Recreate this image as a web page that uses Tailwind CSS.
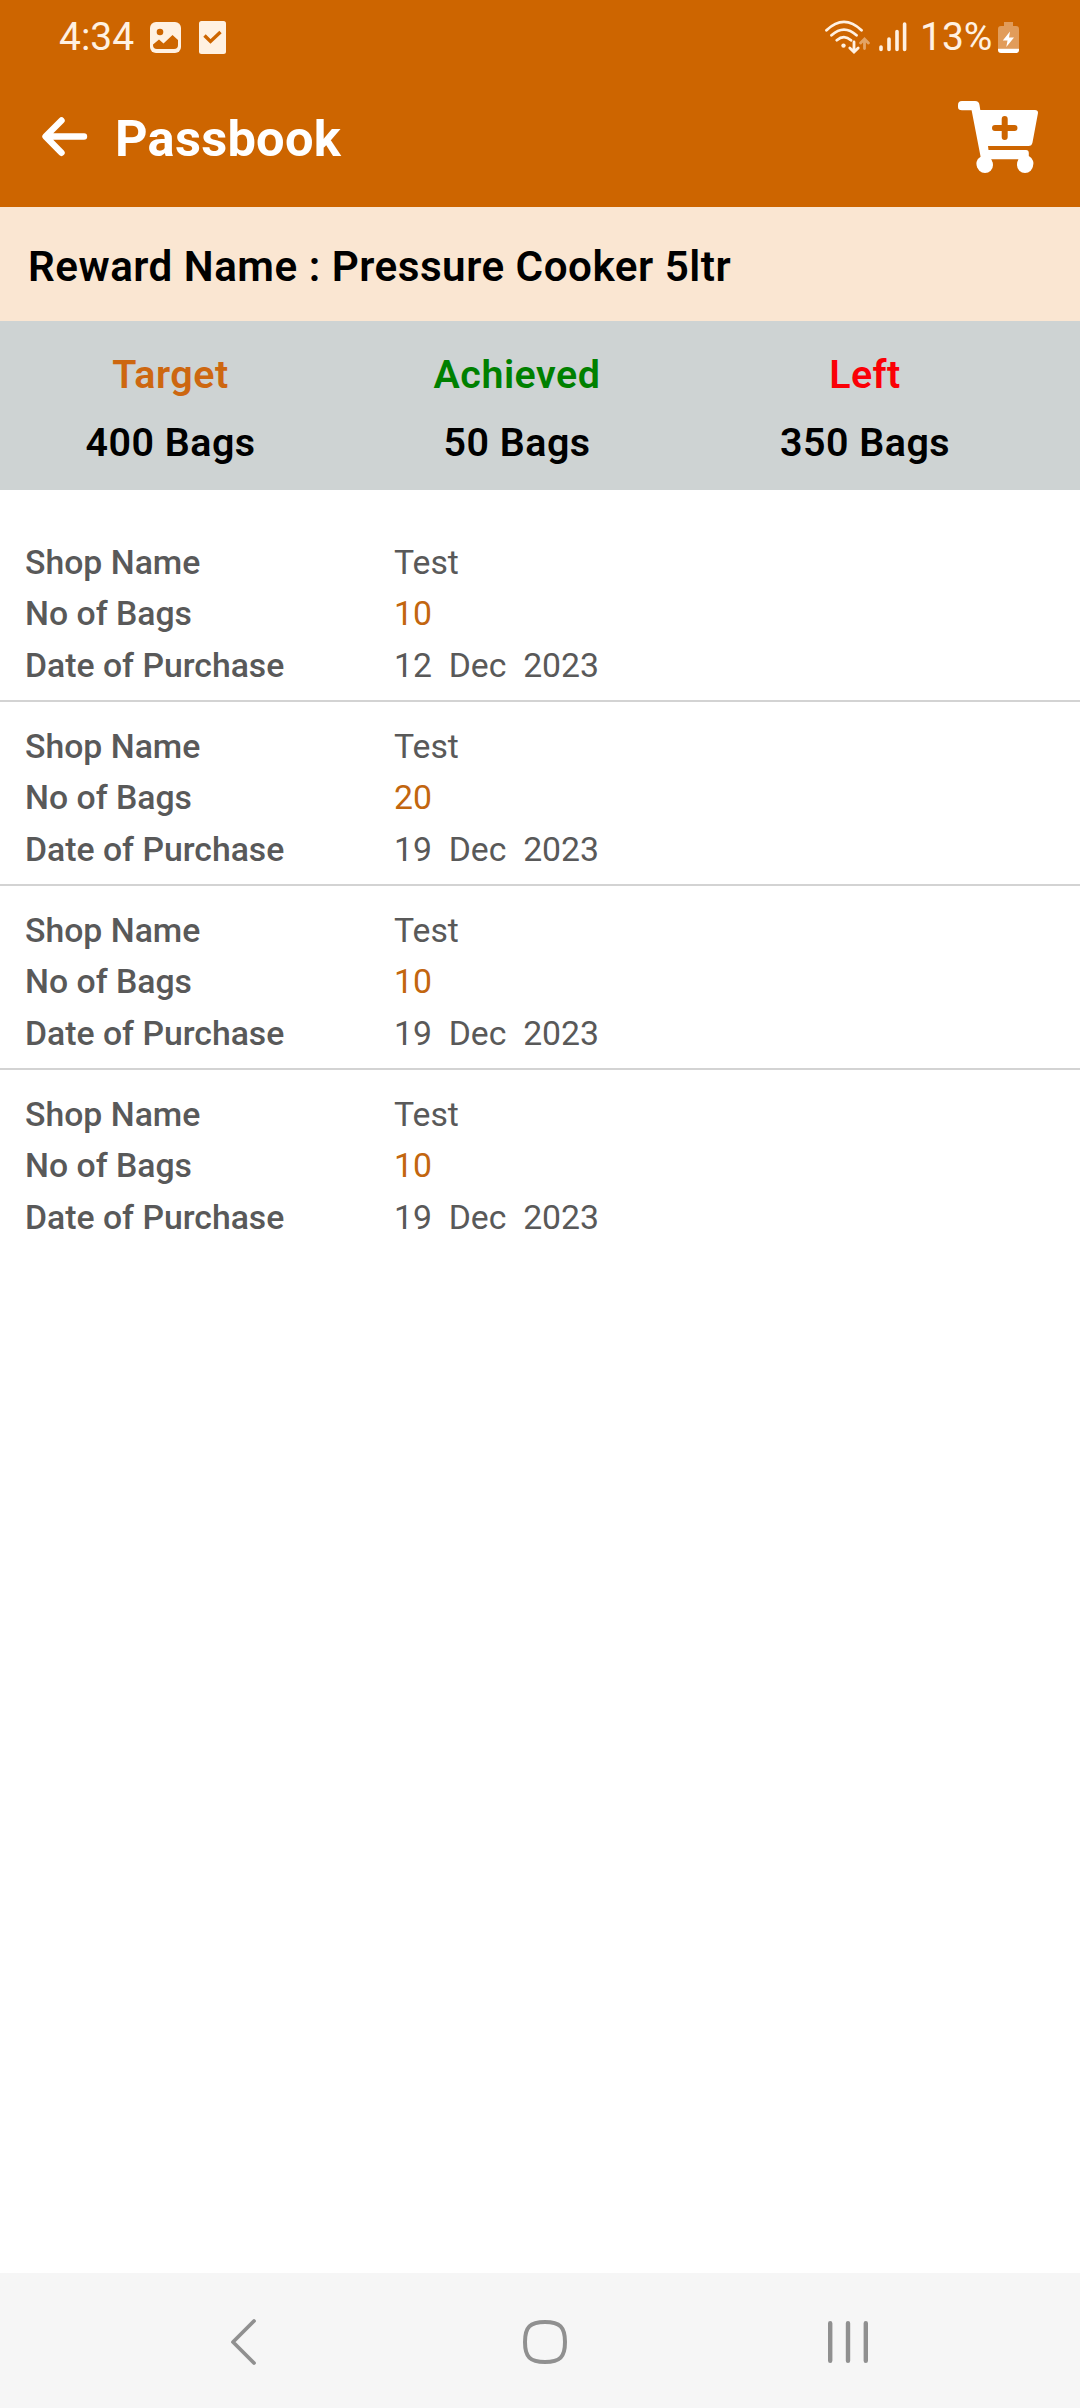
<!DOCTYPE html>
<html lang="en">

<head>
    <meta charset="UTF-8">
    <meta name="viewport" content="width=device-width, initial-scale=1.0">
    <title>Passbook</title>
    <script src="https://cdn.jsdelivr.net/npm/@tailwindcss/browser@4"></script>
</head>

<body class="bg-white">
    <div class="flex flex-col w-[1080px] h-[2408px] overflow-hidden font-[Roboto,sans-serif]">
        <header class="h-[207px] bg-[#cd6500] text-white shrink-0">
            <!-- Status bar -->
            <div class="flex items-center h-[74px] pl-[59px] text-[39px] leading-[74px] text-[#fff1e2]">
                <span class="w-[91px]">4:34</span>
                <svg class="w-[31px] h-[31px]" viewBox="0 0 31 31">
                    <rect width="31" height="31" rx="6" fill="currentColor" />
                    <circle cx="10" cy="10" r="3.3" fill="#cd6500" />
                    <path d="M3 22.5L9 17.5L13.5 21.5L22.5 13L28 18V23Q28 27 24 27H7Q3 27 3 23Z" fill="#cd6500" />
                </svg>
                <svg class="w-[27px] h-[33px] ml-[18px]" viewBox="0 0 27 33">
                    <rect width="27" height="33" rx="2.5" fill="currentColor" />
                    <path d="M5.5 14.5L11.5 20.5L21.5 11" fill="none" stroke="#cd6500" stroke-width="3.4" />
                </svg>
                <svg class="w-[45px] h-[35px] ml-[599px]" viewBox="0 0 45 35" fill="none" stroke="currentColor"
                    stroke-width="2.8" stroke-linecap="round">
                    <path d="M1.5 10.2Q19 -6.5 36.5 10.2M6.5 15.2Q19 4 31.5 15.2M11.8 20.2Q19 14 26 20.2" />
                    <circle cx="18.5" cy="25.6" r="2.2" fill="currentColor" stroke="none" />
                    <path d="M29 22V31.500M24.800 28L29 32L33.200 28" />
                    <path d="M39.500 28.500V19.500M35.600 23L39.500 19L43.400 23" class="opacity-45" />
                </svg>
                <svg class="w-[28px] h-[30px] ml-[9px]" viewBox="0 0 28 30" stroke="currentColor" stroke-width="3.6"
                    stroke-linecap="round">
                    <path d="M2 25V27.500M10 17V27.500M18 9.500V27.500M25.600 2V27.500" />
                </svg>
                <span class="w-[71px] ml-[13px]">13%</span>
                <svg class="w-[21px] h-[31px] ml-[7px]" viewBox="0 0 21 31">
                    <path d="M6 0H15V4H18Q21 4 21 7V26H0V7Q0 4 3 4H6Z" fill="currentColor" class="opacity-40" />
                    <path d="M0 26.500H21V28Q21 31 18 31H3Q0 31 0 28Z" fill="#fff" />
                    <path d="M12 9.500L4.800 18.500H9.500L8.300 25L16 15.500H11Z" fill="#fff" />
                </svg>
            </div>
            <!-- App bar -->
            <div class="flex items-center h-[133px] pl-[42px] pr-[42px] pb-[8px]">
                <svg class="w-[46px] h-[40px]" viewBox="0 0 46 40" fill="none" stroke="currentColor" stroke-width="6.4"
                    stroke-linecap="round" stroke-linejoin="round">
                    <path d="M19.500 3.500L3.500 19.500L19.500 35.800M4.500 19.500H42" />
                </svg>
                <h1 class="ml-[27px] pt-[4px] text-[50.6px] font-bold tracking-[0.25px]">Passbook</h1>
                <svg class="w-[80px] h-[72px] ml-auto" viewBox="0 0 80 72" fill="currentColor">
                    <path
                        d="M4 0H17Q21 0 21.500 4L22.300 9H77Q80.500 9 79.900 12.500L74.500 41.500Q73.800 45 70.500 45H30L30.500 49H68Q70.800 49 70.800 52V55A8 8 0 1 1 60.500 58.200H33A8 8 0 1 1 22.600 55.700L13.600 9.300H4Q0 9.300 0 6V4Q0 0 4 0Z" />
                    <circle cx="27" cy="64" r="8" />
                    <circle cx="67" cy="64" r="8" />
                    <path d="M46.700 18V36M37 27H56.500" stroke="#cd6500" stroke-width="6" stroke-linecap="round" />
                </svg>
            </div>
        </header>

        <section class="h-[114px] pl-[28px] bg-[#fae6d2] shrink-0">
            <h2 class="pt-[3px] text-[42.2px] leading-[114px] font-semibold tracking-[0.5px] text-black">Reward Name : Pressure Cooker 5ltr</h2>
        </section>

        <section
            class="grid grid-cols-[341px_352px_344px] content-start h-[169px] pt-[20px] bg-[#ced3d3] text-[39.4px] leading-[68px] font-semibold tracking-[0.5px] text-center text-black shrink-0">
            <div class="text-[#cd6710]">Target</div>
            <div class="text-[#008000]">Achieved</div>
            <div class="text-[#fb0006]">Left</div>
            <div>400 Bags</div>
            <div>50 Bags</div>
            <div>350 Bags</div>
        </section>

        <main id="entries" class="grow pt-[28px] text-[33.75px] leading-[51px] text-[#595959]"></main>

        <!-- Navigation bar -->
        <nav class="flex items-center h-[135px] pl-[229px] pt-[3px] bg-[#f6f6f6] shrink-0">
            <svg class="w-[28px] h-[48px]" viewBox="0 0 28 48" fill="none" stroke="#909090" stroke-width="3.8"
                stroke-linecap="round" stroke-linejoin="round">
                <path d="M25 3L4 24L25 45" />
            </svg>
            <svg class="w-[44px] h-[44px] ml-[266px]" viewBox="0 0 44 44" fill="none" stroke="#909090"
                stroke-width="4">
                <path d="M22 2C37 2 42 7 42 22S37 42 22 42S2 37 2 22S7 2 22 2Z" />
            </svg>
            <svg class="w-[42px] h-[44px] ml-[260px]" viewBox="0 0 42 44" stroke="#909090" stroke-width="4.4"
                stroke-linecap="round">
                <path d="M3.200 3.200V40.800M21 3.200V40.800M38.800 3.200V40.800" />
            </svg>
        </nav>
    </div>

    <script>
        const entries = [
            { shop: "Test", bags: 10, date: "12  Dec  2023" },
            { shop: "Test", bags: 20, date: "19  Dec  2023" },
            { shop: "Test", bags: 10, date: "19  Dec  2023" },
            { shop: "Test", bags: 10, date: "19  Dec  2023" },
        ];
        document.getElementById("entries").innerHTML = entries.map(entry => `
            <div class="grid grid-cols-[369px_1fr] grid-rows-[51px_52px_51px] content-start h-[184px] pt-[19px] pl-[25px] border-b-2 border-[#d3d3d3] last:border-0">
                <div class="font-medium">Shop Name</div>
                <div>${entry.shop}</div>
                <div class="font-medium">No of Bags</div>
                <div class="text-[#c2660f]">${entry.bags}</div>
                <div class="font-medium">Date of Purchase</div>
                <div class="whitespace-pre">${entry.date}</div>
            </div>`).join("");
    </script>
</body>

</html>
